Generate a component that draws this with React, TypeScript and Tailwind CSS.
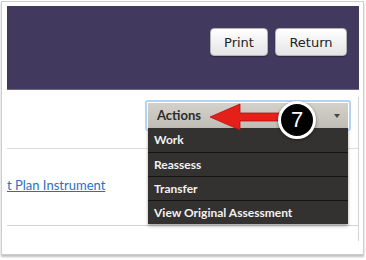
import React from "react";

const menuItems = ["Work", "Reassess", "Transfer", "View Original Assessment"];

export default function App() {
  return (
    <div className="relative w-[366px] h-[260px] bg-white overflow-hidden">
      <div className="ml-[1px] mt-[1px] w-[363px] h-[254px] border border-[#cdcdcd] shadow-[0_2px_2px_rgba(0,0,0,0.25)] pl-[5px] pr-[4px] pt-[4px] bg-white">
        {/* header */}
        <div className="h-[84px] bg-[#41395e] border-b border-[#6d6789] flex justify-end items-start gap-[7px] pt-[22px] pr-[12px]">
          <button className="w-[58px] h-[28px] rounded-[4px] border border-[#b4b4b4] bg-gradient-to-b from-white to-[#e4e4e4] shadow-[0_1px_1px_rgba(0,0,0,0.3)] text-[13px] text-[#222] font-['DejaVu_Sans',sans-serif] leading-none">
            Print
          </button>
          <button className="w-[72px] h-[28px] rounded-[4px] border border-[#b4b4b4] bg-gradient-to-b from-white to-[#e4e4e4] shadow-[0_1px_1px_rgba(0,0,0,0.3)] text-[13px] text-[#222] font-['DejaVu_Sans',sans-serif] leading-none">
            Return
          </button>
        </div>

        {/* body panel */}
        <div className="mt-[7px] w-[352px] h-[144px] border-r border-[#d4d4d4]">
          <div className="h-[129px] border-b border-[#d4d4d4] flex flex-col">
            <div className="h-[52px] border-b border-[#dcdcdc] flex justify-end pt-[3px] pr-[7px]">
              <div className="relative w-[206px] h-[31px] rounded-[3px] border-2 border-[#b3d3f3] p-[1px] z-10">
                <div className="relative h-[25px] bg-gradient-to-b from-[#d3d1ca] to-[#bfbdb5] flex items-center pl-[9px] pr-[8px]">
                  <span className="text-[13px] font-bold text-[#2b2b2b] font-['Lato',sans-serif]">Actions</span>
                  <span className="ml-auto w-0 h-0 border-l-[3px] border-r-[3px] border-t-[4px] border-l-transparent border-r-transparent border-t-[#444]" />
                  <div className="absolute left-0 right-0 top-full bg-[#343131] shadow-[0_2px_3px_rgba(0,0,0,0.35)]">
                    {menuItems.map((m, i) => (
                      <div
                        key={m}
                        className={`h-[24px] flex items-center pl-[6px] text-[12px] font-bold text-[#f2f2f2] font-['Lato',sans-serif] ${i > 0 ? "border-t border-[#161515]" : ""}`}
                      >
                        {m}
                      </div>
                    ))}
                  </div>
                </div>
              </div>
            </div>
            <div className="pt-[23px]">
              <a className="text-[13px] text-[#1f72c4] underline font-['Lato',sans-serif] leading-none">
                t Plan Instrument
              </a>
            </div>
          </div>
        </div>
      </div>

      {/* annotation arrow */}
      <svg className="absolute left-[205px] top-[100px] z-20" width="90" height="34" viewBox="0 0 90 34">
        <path d="M5 17 L35 4 L35 13 L88 13 L88 21 L35 21 L35 30 Z" fill="#e5201b" stroke="#b2130f" strokeWidth="0.8" strokeLinejoin="round" />
      </svg>
      {/* callout number */}
      <div className="absolute left-[278px] top-[101px] z-30 w-[38px] h-[38px] rounded-full bg-black border-[3px] border-white shadow-[0_1px_3px_rgba(0,0,0,0.5)] flex items-center justify-center text-white text-[22px] font-['Liberation_Sans',sans-serif] leading-none">
        7
      </div>
    </div>
  );
}
